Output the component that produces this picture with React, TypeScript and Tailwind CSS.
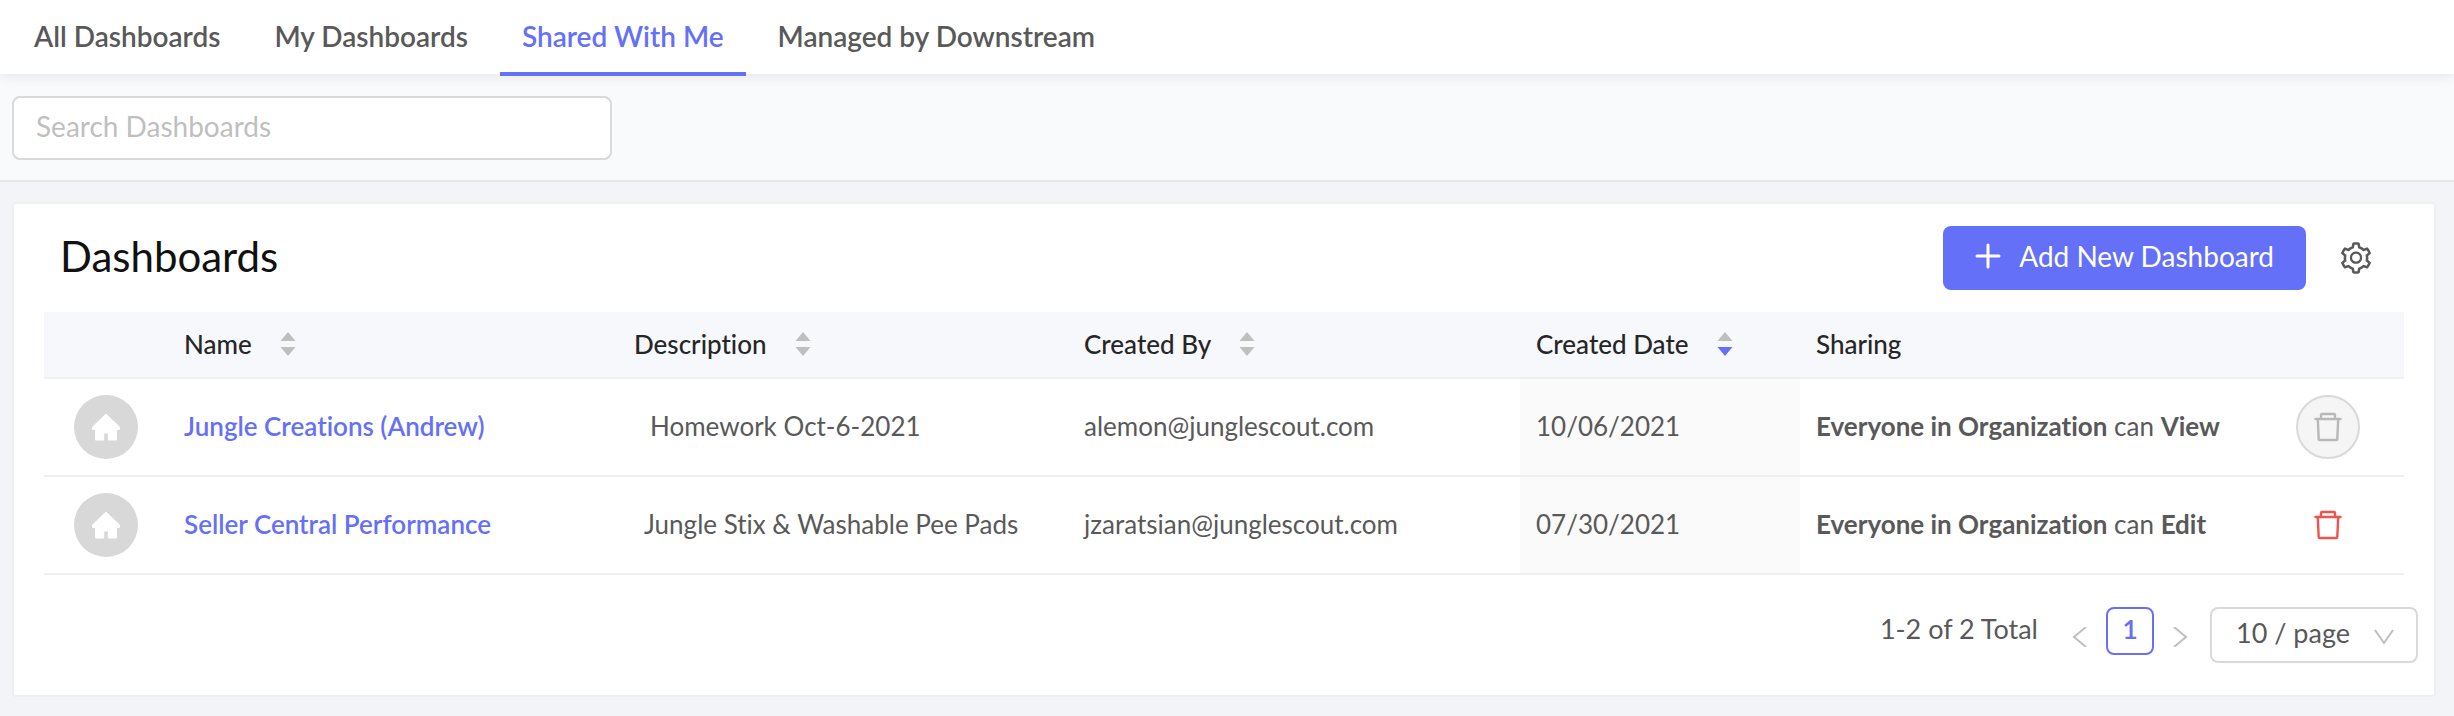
import { AiOutlineSetting } from "react-icons/ai";
import clsx from "clsx";

const tabs = ["All Dashboards", "My Dashboards", "Shared With Me", "Managed by Downstream"];

const columns = [
  { title: "Name", sort: "none" },
  { title: "Description", sort: "none" },
  { title: "Created By", sort: "none" },
  { title: "Created Date", sort: "desc" },
];

const dashboards = [
  {
    name: "Jungle Creations (Andrew)",
    description: "Homework Oct-6-2021",
    indent: "pl-8",
    createdBy: "alemon@junglescout.com",
    createdDate: "10/06/2021",
    access: "View",
  },
  {
    name: "Seller Central Performance",
    description: "Jungle Stix & Washable Pee Pads",
    indent: "pl-[26px]",
    createdBy: "jzaratsian@junglescout.com",
    createdDate: "07/30/2021",
    access: "Edit",
  },
];

function HomeIcon() {
  return (
    <svg viewBox="0 0 28 28" className="size-7" fill="currentColor" stroke="currentColor" strokeLinejoin="round" aria-hidden="true">
      <path d="M14 1 27.5 14v2.500h-3V27H16.300v-7h-4.600v7H3.500V16.500h-3V14Z" />
    </svg>
  );
}

function TrashIcon() {
  return (
    <svg viewBox="0 0 28 30" className="h-[30px] w-7 shrink-0" fill="none" stroke="currentColor" strokeWidth="2.4" strokeLinejoin="round" strokeLinecap="round" aria-hidden="true">
      <path d="M1.500 7h25M7 7V3c0-.6.400-1 1-1h12c.6 0 1 .4 1 1v4M3.800 7l.9 20c0 .6.400 1 1 1h16.600c.6 0 1-.4 1-1l.9-20" />
    </svg>
  );
}

function Sorter({ sort }: { sort: string }) {
  return (
    <svg viewBox="0 0 16 24" className="h-6 w-4" aria-hidden="true">
      <path d="M8 0 15.500 9H.5Z" fill="#bfbfbf" />
      <path d="M8 24 .5 15h15Z" fill={sort === "desc" ? "#6570f8" : "#bfbfbf"} />
    </svg>
  );
}

function Arrow({ d, className }: { d: string; className: string }) {
  return (
    <svg viewBox="0 0 20 20" className={className} fill="none" stroke="currentColor" strokeWidth="2" aria-hidden="true">
      <path d={d} />
    </svg>
  );
}

export default function App() {
  return (
    <main className="min-h-screen bg-[#f3f4f8] pb-4 font-[Lato,sans-serif] text-[28px] leading-10 text-[#595959] [font-variant-ligatures:none]">
      <nav className="relative flex h-[74px] gap-[10px] bg-white pl-3 font-semibold shadow-[0_2px_12px_rgba(0,0,0,0.09)]">
        {tabs.map((tab) => (
          <a
            key={tab}
            href="#"
            className={clsx("h-[76px] px-[22px] pt-4", tab === "Shared With Me" && "border-b-4 border-[#6570f8] text-[#6570f8]")}
          >
            {tab}
          </a>
        ))}
      </nav>

      <div className="border-b-2 border-[#e6e7ea] bg-[#f9fafc] px-3 pt-[22px] pb-5">
        <input
          type="text"
          aria-label="Search Dashboards"
          placeholder="Search Dashboards"
          className="block h-16 w-[600px] rounded-lg border-2 border-[#d9d9d9] bg-white px-[22px] pb-1 placeholder:text-[#bfbfbf]"
        />
      </div>

      <section className="mt-5 mr-[18px] ml-3 rounded border-2 border-[#efeff1] bg-white pb-8">
        <header className="flex items-center justify-between pt-[22px] pr-[60px] pb-[22px] pl-[46px]">
          <h1 className="pb-1 text-[42px] text-[#111111]">Dashboards</h1>
          <div className="flex items-center gap-8">
            <button type="button" className="flex h-16 items-center gap-[18px] rounded-lg bg-[#6570f8] px-8 pb-1 text-white">
              <svg viewBox="0 0 26 26" className="size-[26px]" stroke="currentColor" strokeWidth="3" strokeLinecap="round" aria-hidden="true">
                <path d="M13 2v22M2 13h22" />
              </svg>
              Add New Dashboard
            </button>
            <button type="button" aria-label="Settings">
              <AiOutlineSetting className="size-9" />
            </button>
          </div>
        </header>

        <div className="px-[30px]">
          <table className="w-full table-fixed text-left text-[26px]">
            <colgroup>
              <col className="w-[124px]" />
              <col className="w-[450px]" />
              <col className="w-[450px]" />
              <col className="w-[452px]" />
              <col className="w-[280px]" />
              <col className="w-[480px]" />
              <col className="w-[124px]" />
            </colgroup>
            <thead>
              <tr className="h-[66px] border-b-2 border-[#f0f0f0] bg-[#f7f8fc] text-[#262626]">
                <th />
                {columns.map(({ title, sort }) => (
                  <th key={title} className="px-4 pb-0.5 font-medium">
                    <button type="button" className="flex items-center gap-7">
                      {title}
                      <Sorter sort={sort} />
                    </button>
                  </th>
                ))}
                <th className="px-4 pb-0.5 font-medium">Sharing</th>
                <th />
              </tr>
            </thead>
            <tbody>
              {dashboards.map((row) => (
                <tr key={row.name} className="h-[98px] border-b-2 border-[#f0f0f0]">
                  <td>
                    <span className="mx-auto flex size-16 items-center justify-center rounded-full bg-[#d8d8d8] text-white">
                      <HomeIcon />
                    </span>
                  </td>
                  <td className="px-4 pb-0.5">
                    <a href="#" className="font-semibold text-[#6570f8]">{row.name}</a>
                  </td>
                  <td className={clsx("pb-0.5", row.indent)}>{row.description}</td>
                  <td className="px-4 pb-0.5">{row.createdBy}</td>
                  <td className="bg-[#fafafa] px-4 pb-0.5">{row.createdDate}</td>
                  <td className="px-4 pb-0.5 whitespace-nowrap">
                    <b>Everyone in Organization</b> can <b>{row.access}</b>
                  </td>
                  <td className="pl-4">
                    <button
                      type="button"
                      aria-label={`Delete ${row.name}`}
                      disabled={row.access === "View"}
                      className="flex size-16 items-center justify-center rounded-full border-2 border-transparent text-[#f0534f] disabled:border-[#d9d9d9] disabled:bg-[#f5f5f5] disabled:text-[#b8b8b8]"
                    >
                      <TrashIcon />
                    </button>
                  </td>
                </tr>
              ))}
            </tbody>
          </table>
        </div>

        <footer className="flex items-start justify-end pt-8 pr-4 text-[27px]">
          <span className="mt-0.5">1-2 of 2 Total</span>
          <button type="button" aria-label="Previous page" disabled className="mt-5 ml-8 text-[#bfbfbf]">
            <Arrow d="M16 0 4 10l12 10" className="size-5" />
          </button>
          <button type="button" className="ml-4 size-12 rounded-lg border-2 border-[#6570f8] pb-1 font-semibold text-[#6570f8]">1</button>
          <button type="button" aria-label="Next page" disabled className="mt-5 ml-4 text-[#bfbfbf]">
            <Arrow d="m4 0 12 10L4 20" className="size-5" />
          </button>
          <div className="relative ml-5">
            <select aria-label="Rows per page" className="h-14 w-[208px] appearance-none rounded-lg border-2 border-[#d9d9d9] bg-white pb-1 pl-6">
              <option>10 / page</option>
            </select>
            <Arrow d="m1 3 9 13 9-13" className="pointer-events-none absolute top-5 right-6 size-5 text-[#bfbfbf]" />
          </div>
        </footer>
      </section>
    </main>
  );
}
